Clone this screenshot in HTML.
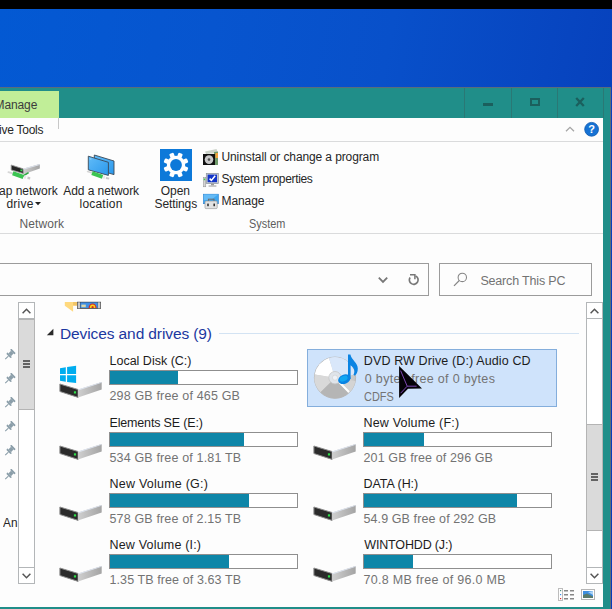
<!DOCTYPE html>
<html>
<head>
<meta charset="utf-8">
<title>This PC</title>
<style>
html,body{margin:0;padding:0;}
body{width:612px;height:609px;overflow:hidden;position:relative;background:#fff;font-family:"Liberation Sans",sans-serif;font-size:12px;color:#1e1e1e;}
.a{position:absolute;}
.t{position:absolute;white-space:nowrap;line-height:20px;height:20px;transform-origin:0 50%;}
.bar{position:absolute;height:12.8px;width:187.2px;border:1px solid #8f8f8f;background:#fff;}
.bar i{display:block;height:12.8px;background:#0e86a8;}
svg{position:absolute;overflow:visible;}
</style>
</head>
<body>

<div class="a" style="left:0;top:0;width:612px;height:9px;background:#000;"></div>
<div class="a" style="left:0;top:9px;width:612px;height:600px;background:linear-gradient(100deg,#0359d3 0%,#0755cf 30%,#0850ca 55%,#0745c0 80%,#063cb8 100%);"></div>
<div class="a" style="left:0;top:87px;width:611px;height:522px;background:#208e89;"></div>
<div class="a" style="left:0;top:87px;width:611px;height:1px;background:#5a6d7a;"></div>
<div class="a" style="left:610px;top:87px;width:1px;height:522px;background:#5a6d7a;"></div>
<div class="a" style="left:0;top:118px;width:603px;height:489px;background:#fdfdfd;"></div>
<div class="a" style="left:0;top:91px;width:59px;height:27px;background:#c1ee98;"></div>
<div class="a" style="left:464px;top:88px;width:1px;height:30px;background:#2a7875;"></div>
<div class="a" style="left:511px;top:88px;width:1px;height:30px;background:#2a7875;"></div>
<div class="a" style="left:557px;top:88px;width:1px;height:30px;background:#2a7875;"></div>
<div class="a" style="left:603px;top:88px;width:1px;height:30px;background:#2a7875;"></div>
<div class="a" style="left:483px;top:103px;width:10px;height:3px;background:#1b5f5d;"></div>
<div class="a" style="left:530px;top:98px;width:6px;height:4px;border:2px solid #1b5f5d;"></div>
<svg style="left:575px;top:98px;" width="10" height="8" viewBox="0 0 10 8"><path d="M1.2 0 L8.8 8 M8.8 0 L1.2 8" stroke="#1b5f5d" stroke-width="2.3" fill="none"/></svg>
<div class="a" style="left:58px;top:118px;width:1px;height:11px;background:#c8c8c8;"></div>
<div class="a" style="left:0;top:141px;width:603px;height:1px;background:#dadbdc;"></div>
<svg style="left:565px;top:126px;" width="10" height="6" viewBox="0 0 10 6"><path d="M1 5.3 L5 1.3 L9 5.3" stroke="#a6a6a6" stroke-width="1.3" fill="none"/></svg>
<svg style="left:584px;top:122px;" width="15" height="15" viewBox="0 0 15 15"><circle cx="7.6" cy="7.3" r="6.9" fill="#1672d4" stroke="#0f5bb0" stroke-width="0.8"/><text x="7.6" y="11.3" text-anchor="middle" font-family="Liberation Sans" font-weight="bold" font-size="11" fill="#fff">?</text></svg>
<div class="a" style="left:0;top:233px;width:603px;height:1px;background:#dadbdc;"></div>
<svg style="left:35px;top:202px;" width="6" height="4" viewBox="0 0 6 4"><path d="M0 0 L6 0 L3 3.2 Z" fill="#222"/></svg>
<div class="a" style="left:-5px;top:263px;width:432px;height:31px;border:1px solid #9b9b9b;"></div>
<div class="a" style="left:439px;top:263px;width:151px;height:31px;border:1px solid #9b9b9b;"></div>
<svg style="left:0;top:0;" width="612" height="609" viewBox="0 0 612 609"><path d="M378.8 277.7 L383 281.9 L387.2 277.7" stroke="#777" stroke-width="1.8" fill="none"/><path d="M415.6 275.9 A4.4 4.4 0 1 1 410.1 277.4" stroke="#777" stroke-width="1.7" fill="none"/><path d="M410 274.7 L414.9 274.7 L414.9 279.2" stroke="#777" stroke-width="1.5" fill="none"/></svg>
<svg style="left:453px;top:272px;" width="15" height="15" viewBox="0 0 15 15"><circle cx="9.3" cy="5.4" r="4.2" stroke="#858585" stroke-width="1.05" fill="none"/><path d="M6.3 8.5 L1 13.8" stroke="#858585" stroke-width="1.15"/></svg>
<div class="a" style="left:307px;top:349px;width:248px;height:56px;background:#cfe3fb;border:1px solid #84aedc;"></div>
<div class="a" style="left:219px;top:333px;width:360px;height:1px;background:#d3e3f3;"></div>
<svg style="left:46px;top:328px;" width="8" height="8" viewBox="0 0 8 8"><path d="M7.4 0.8 L7.4 7.2 L0.8 7.2 Z" fill="#2a2a2a"/></svg>
<div class="bar" style="left:109px;top:370.05px;"><i style="width:68px"></i></div>
<div class="bar" style="left:109px;top:432.05px;"><i style="width:134px"></i></div>
<div class="bar" style="left:363px;top:432.05px;"><i style="width:60px"></i></div>
<div class="bar" style="left:109px;top:493.05px;"><i style="width:139px"></i></div>
<div class="bar" style="left:363px;top:493.05px;"><i style="width:153px"></i></div>
<div class="bar" style="left:109px;top:554.05px;"><i style="width:119px"></i></div>
<div class="bar" style="left:363px;top:554.05px;"><i style="width:49px"></i></div>
<div class="a" style="left:18px;top:302px;width:15px;height:280px;border:1px solid #b3b6b8;background:#fff;"></div><div class="a" style="left:18px;top:318px;width:17px;height:1px;background:#b3b6b8;"></div><div class="a" style="left:18px;top:567px;width:17px;height:1px;background:#b3b6b8;"></div><div class="a" style="left:18px;top:319px;width:15px;height:88.5px;background:#dadada;border:1px solid #b4b4b4;"></div><div class="a" style="left:23px;top:360px;width:7px;height:2px;background:#636363;"></div><div class="a" style="left:23px;top:363px;width:7px;height:2px;background:#636363;"></div><div class="a" style="left:23px;top:366px;width:7px;height:2px;background:#636363;"></div><svg style="left:22px;top:308.4px;" width="9" height="6" viewBox="0 0 9 6"><path d="M0.6 5.2 L4.5 1.2 L8.4 5.2" stroke="#555" stroke-width="1.5" fill="none"/></svg><svg style="left:22px;top:572.5px;" width="9" height="6" viewBox="0 0 9 6"><path d="M0.6 0.8 L4.5 4.8 L8.4 0.8" stroke="#555" stroke-width="1.5" fill="none"/></svg>
<div class="a" style="left:586px;top:302px;width:15px;height:280px;border:1px solid #b3b6b8;background:#fff;"></div><div class="a" style="left:586px;top:318px;width:17px;height:1px;background:#b3b6b8;"></div><div class="a" style="left:586px;top:567px;width:17px;height:1px;background:#b3b6b8;"></div><div class="a" style="left:586px;top:424px;width:15px;height:105px;background:#dadada;border:1px solid #b4b4b4;"></div><div class="a" style="left:591px;top:473px;width:7px;height:2px;background:#636363;"></div><div class="a" style="left:591px;top:476px;width:7px;height:2px;background:#636363;"></div><div class="a" style="left:591px;top:479px;width:7px;height:2px;background:#636363;"></div><svg style="left:590px;top:308.4px;" width="9" height="6" viewBox="0 0 9 6"><path d="M0.6 5.2 L4.5 1.2 L8.4 5.2" stroke="#555" stroke-width="1.5" fill="none"/></svg><svg style="left:590px;top:572.5px;" width="9" height="6" viewBox="0 0 9 6"><path d="M0.6 0.8 L4.5 4.8 L8.4 0.8" stroke="#555" stroke-width="1.5" fill="none"/></svg>
<div class="t" id="t_manage" style="left:-5.5px;top:95.0px;font-size:12px;color:#3c3c3c;letter-spacing:-0.1px;">Manage</div>
<div class="t" id="t_tools" style="left:-1.0px;top:120.0px;font-size:12px;color:#262626;letter-spacing:-0.25px;">ive Tools</div>
<div class="t" id="t_map1" style="left:-1.0px;top:181.0px;font-size:12px;color:#262626;letter-spacing:0.0px;">ap network</div>
<div class="t" id="t_map2" style="left:6.4px;top:194.0px;font-size:12px;color:#262626;letter-spacing:0.25px;">drive</div>
<div class="t" id="t_add1" style="left:63.3px;top:181.0px;font-size:12px;color:#262626;letter-spacing:-0.075px;">Add a network</div>
<div class="t" id="t_add2" style="left:79.5px;top:194.0px;font-size:12px;color:#262626;letter-spacing:0.214px;">location</div>
<div class="t" id="t_open1" style="left:160.7px;top:181.2px;font-size:12px;color:#262626;letter-spacing:0.0px;">Open</div>
<div class="t" id="t_open2" style="left:154.5px;top:194.0px;font-size:12px;color:#262626;letter-spacing:-0.101px;">Settings</div>
<div class="t" id="t_un" style="left:221.5px;top:147.0px;font-size:12px;color:#262626;letter-spacing:-0.11px;">Uninstall or change a program</div>
<div class="t" id="t_sp" style="left:221.5px;top:168.8px;font-size:12px;color:#262626;letter-spacing:-0.338px;">System properties</div>
<div class="t" id="t_mg" style="left:221.5px;top:190.7px;font-size:12px;color:#262626;letter-spacing:-0.08px;">Manage</div>
<div class="t" id="t_net" style="left:19.5px;top:214.0px;font-size:12px;color:#5d5d5d;letter-spacing:0.083px;">Network</div>
<div class="t" id="t_sys" style="left:249.49px;top:214.0px;font-size:12px;color:#5d5d5d;transform:scaleX(0.9079);">System</div>
<div class="t" id="t_search" style="left:480.4px;top:270.6px;font-size:12.5px;color:#737373;letter-spacing:-0.17px;">Search This PC</div>
<div class="t" id="t_dev" style="left:60.0px;top:324.0px;font-size:15.5px;color:#1b37a0;letter-spacing:-0.105px;">Devices and drives (9)</div>
<div class="t" id="t_an" style="left:3.2px;top:512.9px;font-size:12.5px;color:#262626;transform:scaleX(0.9467);">An</div>
<div class="t" id="n1" style="left:109.5px;top:350.9px;font-size:12.5px;color:#1c1c1c;letter-spacing:0.0px;">Local Disk (C:)</div>
<div class="t" id="f1" style="left:109.5px;top:386.0px;font-size:12.5px;color:#737373;letter-spacing:0.16px;">298 GB free of 465 GB</div>
<div class="t" id="n2" style="left:363.8px;top:350.9px;font-size:12.5px;color:#1c1c1c;letter-spacing:0.124px;">DVD RW Drive (D:) Audio CD</div>
<div class="t" id="f2" style="left:364.8px;top:368.6px;font-size:12.5px;color:#737373;letter-spacing:0.323px;">0 bytes free of 0 bytes</div>
<div class="t" id="f2b" style="left:363.93px;top:386.5px;font-size:12.5px;color:#737373;transform:scaleX(0.8727);">CDFS</div>
<div class="t" id="n3" style="left:109.5px;top:412.9px;font-size:12.5px;color:#1c1c1c;letter-spacing:-0.167px;">Elements SE (E:)</div>
<div class="t" id="f3" style="left:109.5px;top:448.0px;font-size:12.5px;color:#737373;letter-spacing:0.152px;">534 GB free of 1.81 TB</div>
<div class="t" id="n4" style="left:363.5px;top:412.9px;font-size:12.5px;color:#1c1c1c;letter-spacing:0.179px;">New Volume (F:)</div>
<div class="t" id="f4" style="left:363.5px;top:448.0px;font-size:12.5px;color:#737373;letter-spacing:0.115px;">201 GB free of 296 GB</div>
<div class="t" id="n5" style="left:109.5px;top:473.9px;font-size:12.5px;color:#1c1c1c;letter-spacing:0.229px;">New Volume (G:)</div>
<div class="t" id="f5" style="left:109.5px;top:509.0px;font-size:12.5px;color:#737373;letter-spacing:0.152px;">578 GB free of 2.15 TB</div>
<div class="t" id="n6" style="left:363.5px;top:473.9px;font-size:12.5px;color:#1c1c1c;letter-spacing:-0.05px;">DATA (H:)</div>
<div class="t" id="f6" style="left:363.5px;top:509.0px;font-size:12.5px;color:#737373;letter-spacing:0.095px;">54.9 GB free of 292 GB</div>
<div class="t" id="n7" style="left:109.5px;top:534.9px;font-size:12.5px;color:#1c1c1c;letter-spacing:0.186px;">New Volume (I:)</div>
<div class="t" id="f7" style="left:109.5px;top:570.0px;font-size:12.5px;color:#737373;letter-spacing:0.091px;">1.35 TB free of 3.63 TB</div>
<div class="t" id="n8" style="left:364.3px;top:534.9px;font-size:12.5px;color:#1c1c1c;letter-spacing:-0.158px;">WINTOHDD (J:)</div>
<div class="t" id="f8" style="left:363.5px;top:570.0px;font-size:12.5px;color:#737373;letter-spacing:0.3px;">70.8 MB free of 96.0 MB</div>
<svg style="left:0;top:0" width="612" height="609" viewBox="0 0 612 609">
<defs>
<linearGradient id="gs" x1="0" y1="0" x2="1" y2="0"><stop offset="0" stop-color="#cfcfcf"/><stop offset="1" stop-color="#a4a4a4"/></linearGradient>
<linearGradient id="mon" x1="0" y1="0" x2="1" y2="1"><stop offset="0" stop-color="#62bcf8"/><stop offset="1" stop-color="#2a98ec"/></linearGradient>
<radialGradient id="cdg" cx="0.5" cy="0.5" r="0.5"><stop offset="0" stop-color="#e8e8e8"/><stop offset="1" stop-color="#c4c4c4"/></radialGradient>
</defs>
<!-- map network drive -->
<g>
<path d="M23 168.8 L39.8 164 L39.8 168.6 L23.6 174.2 Z" fill="url(#gs)"/>
<path d="M23 168.8 L39.8 164 L39.8 164.9 L23 169.8 Z" fill="#dde3ee"/>
<path d="M11.2 165 L23 168.8 L23.4 173.6 L11.2 169.9 Z" fill="#262626" stroke="#9a9a9a" stroke-width="0.9" stroke-linejoin="round"/>
<rect x="20.4" y="169.5" width="1.8" height="1.8" fill="#2fe04a"/>
<path d="M8.4 172.2 L12.6 173.4" stroke="#d6d6d6" stroke-width="1.8" stroke-linecap="round"/>
<path d="M23 176 L28.6 172.6" stroke="#2fa844" stroke-width="1.6"/>
<path d="M12.8 173.3 L23.4 176.9" stroke="#3cc452" stroke-width="4.2"/>
<path d="M24 176.6 L26 177.4" stroke="#e8e8e8" stroke-width="3.6"/>
<path d="M27.6 176.6 L30.4 177.2 L30 179.4 L27.4 179 Z" fill="#c9c9c9"/>
</g>
<!-- add network location -->
<g>
<path d="M94.3 155 L114 161 L114 174.6 L94.3 169 Z" fill="url(#mon)" stroke="#3a4756" stroke-width="0.9"/>
<path d="M88.3 156.2 L108.4 162.3 L108.4 175.4 L88.3 169.8 Z" fill="url(#mon)" stroke="#3a4756" stroke-width="0.9"/>
<rect x="89.6" y="158" width="1.8" height="1.8" fill="#7fcaf9"/>
<path d="M87.6 171.6 L91.4 172.8" stroke="#d6d6d6" stroke-width="1.6" stroke-linecap="round"/>
<path d="M92 173.2 L102.6 176.9" stroke="#3cc452" stroke-width="4"/>
<path d="M103.2 176.8 L105 177.4" stroke="#e8e8e8" stroke-width="3.4"/>
<path d="M106 177 L109.4 177.8 L109 179.6 L105.8 179 Z" fill="#c9c9c9"/>
</g>
<!-- settings -->
<rect x="160" y="149" width="32" height="32" fill="#0d79d9"/>
<g transform="translate(176,165)" fill="#fff">
<circle r="9.2"/>
<rect x="-2.3" y="-12.6" width="4.6" height="6" rx="1.2" transform="rotate(22.5)"/><rect x="-2.3" y="-12.6" width="4.6" height="6" rx="1.2" transform="rotate(67.5)"/><rect x="-2.3" y="-12.6" width="4.6" height="6" rx="1.2" transform="rotate(112.5)"/><rect x="-2.3" y="-12.6" width="4.6" height="6" rx="1.2" transform="rotate(157.5)"/><rect x="-2.3" y="-12.6" width="4.6" height="6" rx="1.2" transform="rotate(202.5)"/><rect x="-2.3" y="-12.6" width="4.6" height="6" rx="1.2" transform="rotate(247.5)"/><rect x="-2.3" y="-12.6" width="4.6" height="6" rx="1.2" transform="rotate(292.5)"/><rect x="-2.3" y="-12.6" width="4.6" height="6" rx="1.2" transform="rotate(337.5)"/><circle r="5.9" fill="#0d79d9"/>
</g>
<!-- uninstall -->
<g>
<path d="M205 151.5 L216.5 149 L218 153 L206 154 Z" fill="#ccd3ca"/>
<path d="M214 152 L218 151.5 L218 165 L214.5 165 Z" fill="#6f9a6a"/>
<rect x="215.5" y="153" width="2.5" height="5" fill="#f2a23a"/>
<rect x="203" y="154" width="12" height="11" fill="#101010"/>
<circle cx="209" cy="159.6" r="4.3" fill="#c9c9c9"/>
<circle cx="209" cy="159.6" r="1.3" fill="#555"/>
</g>
<!-- system properties -->
<g>
<rect x="203.4" y="177.6" width="2.4" height="9.2" fill="#d4d4d4" stroke="#8f8f8f" stroke-width="0.5"/>
<rect x="203.8" y="178.6" width="1.4" height="1.6" fill="#3fd24a"/>
<rect x="206.3" y="173.4" width="12" height="10.2" fill="#c8ccd2" stroke="#8c939c" stroke-width="0.7"/>
<rect x="207.6" y="174.6" width="9.4" height="7.6" fill="#1335c8"/>
<path d="M209.6 178.6 L211.4 180.4 L215.2 175.8" stroke="#fff" stroke-width="1.5" fill="none"/>
<rect x="211" y="183.8" width="3" height="1.6" fill="#9a9a9a"/>
<rect x="208.6" y="185.4" width="7.8" height="1.3" fill="#b0b0b0"/>
</g>
<!-- manage -->
<g>
<rect x="203.4" y="194.2" width="15" height="9.5" fill="#3fa7f0" stroke="#2a7fd0" stroke-width="0.6"/>
<path d="M203.8 194.6 L218 194.6 L211 200 L203.8 200 Z" fill="#6fc0f7" opacity="0.8"/>
<rect x="208.4" y="199.2" width="5.6" height="2.4" fill="none" stroke="#6b6b6b" stroke-width="1"/>
<rect x="205" y="201" width="12.2" height="7.6" rx="1" fill="#e2e2e2" stroke="#8f8f8f" stroke-width="0.6"/>
<rect x="207.2" y="203.6" width="1.6" height="2.6" fill="#333"/>
<rect x="213.4" y="203.6" width="1.6" height="2.6" fill="#333"/>
</g>
<!-- folder + film partial -->
<g>
<path d="M64.8 302 L77 302 L77 305.6 L73.1 305.6 L73.1 311.8 L64.8 305.7 Z" fill="#ffd97e"/>
<rect x="73.1" y="302" width="3.9" height="3.6" fill="#f2c465"/>
<rect x="77" y="301.8" width="24" height="7" fill="#3c3c3c"/>
<rect x="77.6" y="302.3" width="2.4" height="6" fill="#c8c8c8"/>
<rect x="98" y="302.3" width="2.4" height="6" fill="#c8c8c8"/>
<rect x="80.4" y="302.4" width="17.4" height="5.6" fill="#3f8fe4"/>
<path d="M88.6 308 A4 4.6 0 0 1 96.6 308 Z" fill="#d8281e"/>
<path d="M89.8 308 A2.8 3.4 0 0 1 95.4 308 Z" fill="#f6d21e"/>
<path d="M91.4 308 A1.2 2 0 0 1 93.8 308 Z" fill="#d8281e"/>
<rect x="81.4" y="304.6" width="4.4" height="2.6" fill="#d9d6a8"/>
</g>
<g transform="translate(9.6,354.8) rotate(45) scale(0.86)" fill="#8b9ea9"><rect x="-3.6" y="-6.4" width="7.2" height="2" rx="0.6"/><rect x="-2.2" y="-4.6" width="4.4" height="4.6"/><path d="M-4 0 L4 0 L3.2 2 L-3.2 2 Z"/><rect x="-0.6" y="2" width="1.2" height="5.2"/></g><g transform="translate(9.6,378.8) rotate(45) scale(0.86)" fill="#8b9ea9"><rect x="-3.6" y="-6.4" width="7.2" height="2" rx="0.6"/><rect x="-2.2" y="-4.6" width="4.4" height="4.6"/><path d="M-4 0 L4 0 L3.2 2 L-3.2 2 Z"/><rect x="-0.6" y="2" width="1.2" height="5.2"/></g><g transform="translate(9.6,402.8) rotate(45) scale(0.86)" fill="#8b9ea9"><rect x="-3.6" y="-6.4" width="7.2" height="2" rx="0.6"/><rect x="-2.2" y="-4.6" width="4.4" height="4.6"/><path d="M-4 0 L4 0 L3.2 2 L-3.2 2 Z"/><rect x="-0.6" y="2" width="1.2" height="5.2"/></g><g transform="translate(9.6,426.8) rotate(45) scale(0.86)" fill="#8b9ea9"><rect x="-3.6" y="-6.4" width="7.2" height="2" rx="0.6"/><rect x="-2.2" y="-4.6" width="4.4" height="4.6"/><path d="M-4 0 L4 0 L3.2 2 L-3.2 2 Z"/><rect x="-0.6" y="2" width="1.2" height="5.2"/></g><g transform="translate(9.6,450.8) rotate(45) scale(0.86)" fill="#8b9ea9"><rect x="-3.6" y="-6.4" width="7.2" height="2" rx="0.6"/><rect x="-2.2" y="-4.6" width="4.4" height="4.6"/><path d="M-4 0 L4 0 L3.2 2 L-3.2 2 Z"/><rect x="-0.6" y="2" width="1.2" height="5.2"/></g><g transform="translate(9.6,474.8) rotate(45) scale(0.86)" fill="#8b9ea9"><rect x="-3.6" y="-6.4" width="7.2" height="2" rx="0.6"/><rect x="-2.2" y="-4.6" width="4.4" height="4.6"/><path d="M-4 0 L4 0 L3.2 2 L-3.2 2 Z"/><rect x="-0.6" y="2" width="1.2" height="5.2"/></g><g transform="translate(59.9,384)"><path d="M0 0 L18.2 5.5 L18.2 13.4 L0 7.5 Z" fill="#2b2b2b" stroke="#8e8e8e" stroke-width="1" stroke-linejoin="round"/><path d="M18.2 5.5 L41.8 -2 L41.8 5.6 L18.2 13.4 Z" fill="url(#gs)"/><path d="M18.2 5.5 L41.8 -2 L41.8 -1.2 L18.2 6.4 Z" fill="#dfe6f2"/><rect x="14" y="7.3" width="2.2" height="2.2" fill="#2fe04a"/></g><g transform="translate(59.9,446)"><path d="M0 0 L18.2 5.5 L18.2 13.4 L0 7.5 Z" fill="#2b2b2b" stroke="#8e8e8e" stroke-width="1" stroke-linejoin="round"/><path d="M18.2 5.5 L41.8 -2 L41.8 5.6 L18.2 13.4 Z" fill="url(#gs)"/><path d="M18.2 5.5 L41.8 -2 L41.8 -1.2 L18.2 6.4 Z" fill="#dfe6f2"/><rect x="14" y="7.3" width="2.2" height="2.2" fill="#2fe04a"/></g><g transform="translate(313.9,446)"><path d="M0 0 L18.2 5.5 L18.2 13.4 L0 7.5 Z" fill="#2b2b2b" stroke="#8e8e8e" stroke-width="1" stroke-linejoin="round"/><path d="M18.2 5.5 L41.8 -2 L41.8 5.6 L18.2 13.4 Z" fill="url(#gs)"/><path d="M18.2 5.5 L41.8 -2 L41.8 -1.2 L18.2 6.4 Z" fill="#dfe6f2"/><rect x="14" y="7.3" width="2.2" height="2.2" fill="#2fe04a"/></g><g transform="translate(59.9,507)"><path d="M0 0 L18.2 5.5 L18.2 13.4 L0 7.5 Z" fill="#2b2b2b" stroke="#8e8e8e" stroke-width="1" stroke-linejoin="round"/><path d="M18.2 5.5 L41.8 -2 L41.8 5.6 L18.2 13.4 Z" fill="url(#gs)"/><path d="M18.2 5.5 L41.8 -2 L41.8 -1.2 L18.2 6.4 Z" fill="#dfe6f2"/><rect x="14" y="7.3" width="2.2" height="2.2" fill="#2fe04a"/></g><g transform="translate(313.9,507)"><path d="M0 0 L18.2 5.5 L18.2 13.4 L0 7.5 Z" fill="#2b2b2b" stroke="#8e8e8e" stroke-width="1" stroke-linejoin="round"/><path d="M18.2 5.5 L41.8 -2 L41.8 5.6 L18.2 13.4 Z" fill="url(#gs)"/><path d="M18.2 5.5 L41.8 -2 L41.8 -1.2 L18.2 6.4 Z" fill="#dfe6f2"/><rect x="14" y="7.3" width="2.2" height="2.2" fill="#2fe04a"/></g><g transform="translate(59.9,568)"><path d="M0 0 L18.2 5.5 L18.2 13.4 L0 7.5 Z" fill="#2b2b2b" stroke="#8e8e8e" stroke-width="1" stroke-linejoin="round"/><path d="M18.2 5.5 L41.8 -2 L41.8 5.6 L18.2 13.4 Z" fill="url(#gs)"/><path d="M18.2 5.5 L41.8 -2 L41.8 -1.2 L18.2 6.4 Z" fill="#dfe6f2"/><rect x="14" y="7.3" width="2.2" height="2.2" fill="#2fe04a"/></g><g transform="translate(313.9,568)"><path d="M0 0 L18.2 5.5 L18.2 13.4 L0 7.5 Z" fill="#2b2b2b" stroke="#8e8e8e" stroke-width="1" stroke-linejoin="round"/><path d="M18.2 5.5 L41.8 -2 L41.8 5.6 L18.2 13.4 Z" fill="url(#gs)"/><path d="M18.2 5.5 L41.8 -2 L41.8 -1.2 L18.2 6.4 Z" fill="#dfe6f2"/><rect x="14" y="7.3" width="2.2" height="2.2" fill="#2fe04a"/></g><g fill="#00adef">
<path d="M60 368.2 L65.8 367.3 L65.8 373.9 L60 373.9 Z"/>
<path d="M67.1 367.1 L76.1 365.8 L76.1 373.9 L67.1 373.9 Z"/>
<path d="M60 375.2 L65.8 375.2 L65.8 381.7 L60 380.8 Z"/>
<path d="M67.1 375.2 L76.1 375.2 L76.1 383 L67.1 381.9 Z"/>
</g>
<g>
<circle cx="335" cy="377.7" r="20.6" fill="url(#cdg)" stroke="#b9b9b9" stroke-width="1"/>
<path d="M335 377.7 L314.7 374.4 A20.6 20.6 0 0 1 329 358 Z" fill="#ffffff"/>
<path d="M335 377.7 L329 358 A20.6 20.6 0 0 1 355.4 374.6 Z" fill="#d9e7fa"/>
<path d="M335 377.7 L314.7 374.4 A20.6 20.6 0 0 0 320.5 392.3 Z" fill="#d9d9d9"/>
<path d="M335 377.7 L320.5 392.3 A20.6 20.6 0 0 0 348.5 393.2 Z" fill="#b5b5b5"/>
<path d="M335 377.7 L348.5 393.2 A20.6 20.6 0 0 0 355.4 381 Z" fill="#d4d4d4"/>
<path d="M337 380 L349 392" stroke="#fff" stroke-width="2"/>
<circle cx="335" cy="377.7" r="6.2" fill="#dfe4ea" stroke="#c6c6c6" stroke-width="0.8"/>
<circle cx="335" cy="377.7" r="2.6" fill="#eef2f8" stroke="#cfcfcf" stroke-width="0.6"/>
<path d="M348 354.4 L350.4 354.4 C351.5 360 357.8 362.5 357.8 368.5 C357.8 372 356.5 374.5 354.8 375.8 L353.4 374.6 C355 372 355 368.5 350.6 365.2 L350.6 379 L348 379 Z" fill="#0b84e3"/>
<ellipse cx="344.3" cy="379.2" rx="6.4" ry="4.6" transform="rotate(-22 344.3 379.2)" fill="#0b84e3"/>
<ellipse cx="343.6" cy="378.6" rx="4.2" ry="2.6" transform="rotate(-22 343.6 378.6)" fill="#12a6f2"/>
</g>
<g>
<rect x="558.5" y="588.5" width="4" height="12" fill="#fff" stroke="#bdbdbd" stroke-width="1"/>
<rect x="560" y="590" width="1.2" height="1.2" fill="#4a8f7a"/>
<rect x="560" y="594" width="1.2" height="1.2" fill="#3b8ff0"/>
<rect x="560" y="598" width="1.2" height="1.2" fill="#e02828"/>
<rect x="564" y="590.2" width="4" height="1.2" fill="#6a6a6a"/><rect x="570" y="590.2" width="4" height="1.2" fill="#6a6a6a"/><rect x="564" y="594.2" width="4" height="1.2" fill="#6a6a6a"/><rect x="570" y="594.2" width="4" height="1.2" fill="#6a6a6a"/><rect x="564" y="598.2" width="4" height="1.2" fill="#6a6a6a"/><rect x="570" y="598.2" width="4" height="1.2" fill="#6a6a6a"/><rect x="581.5" y="589.5" width="13" height="10" fill="#fff" stroke="#b5b5b5" stroke-width="1"/>
<rect x="583" y="591" width="10" height="7" fill="#3f8fe0"/>
<path d="M583 595 L587 593.4 L593 596.5 L593 598 L583 598 Z" fill="#5a7a6a"/>
<path d="M588 592 L593 591 L593 595 Z" fill="#a9d2f5"/>
</g>
<g>
<path d="M399.1 366 L399.1 398 L408 388.8 L422 388.6 Z" fill="#050308"/>
<path d="M400.6 370.6 L407.2 386.2 L416.6 386.2 M407.2 386.2 L400.6 393.2" stroke="#8a4fc4" stroke-width="0.9" fill="none"/>
</g>
</svg>
</body></html>
